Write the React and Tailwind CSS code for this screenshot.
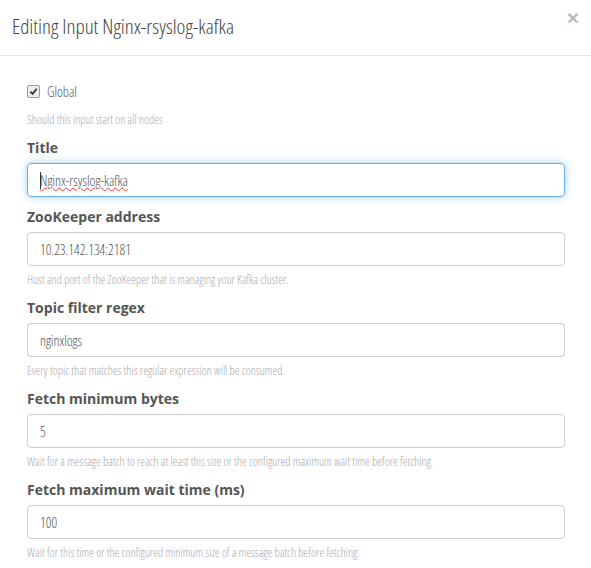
const fields = [
  {
    label: 'ZooKeeper address',
    value: '10.23.142.134:2181',
    help: 'Host and port of the ZooKeeper that is managing your Kafka cluster.',
  },
  {
    label: 'Topic filter regex',
    value: 'nginxlogs',
    help: 'Every topic that matches this regular expression will be consumed.',
  },
  {
    label: 'Fetch minimum bytes',
    value: '5',
    help: 'Wait for a message batch to reach at least this size or the configured maximum wait time before fetching.',
  },
  {
    label: 'Fetch maximum wait time (ms)',
    value: '100',
    help: 'Wait for this time or the configured minimum size of a message batch before fetching.',
  },
];

const cond = "font-['Open_Sans',sans-serif] font-light [font-stretch:75%]";

function Label({ children }) {
  return (
    <div className="font-['Open_Sans',sans-serif] font-bold text-[14px] leading-[20px] text-[#555] mb-[5px]">
      {children}
    </div>
  );
}

function Help({ children, className = '' }) {
  return (
    <div className={`text-[12px] leading-[16px] text-[#aaa] ${cond} ${className}`}>{children}</div>
  );
}

function Field({ label, value, help }) {
  return (
    <div className="mt-[10px]">
      <Label>{label}</Label>
      <div className={`h-[34px] border border-[#ccc] rounded-[4px] px-[12px] flex items-center text-[14px] text-[#555] ${cond}`}>
        {value}
      </div>
      <Help className="mt-[6px]">{help}</Help>
    </div>
  );
}

export default function App() {
  return (
    <div className="w-[591px] h-[568px] bg-white overflow-hidden">
      <div className="h-[56px] border-b border-[#e5e5e5] flex items-start justify-between pl-[12px] pr-[12px]">
        <h4 className={`mt-[13px] text-[21px] leading-[26px] text-[#444] ${cond}`}>
          Editing Input Nginx-rsyslog-kafka
        </h4>
        <span className="mt-[5px] text-[21px] font-bold leading-[26px] text-[#bbb] font-['Liberation_Sans',sans-serif]">
          ×
        </span>
      </div>
      <div className="pl-[27px] pr-[26px] pt-[26px]">
        <div className="flex items-center h-[18px]">
          <span className="w-[13px] h-[13px] border border-[#999] rounded-[2px] bg-[#eee] flex items-center justify-center">
            <svg width="9" height="9" viewBox="0 0 10 10">
              <path d="M1.5 5.2 L4 7.6 L8.6 2" stroke="#333" strokeWidth="2" fill="none" />
            </svg>
          </span>
          <span className={`ml-[7px] text-[14px] text-[#555] ${cond}`}>Global</span>
        </div>
        <Help className="mt-[12px]">Should this input start on all nodes</Help>
        <div className="mt-[10px]">
          <Label>Title</Label>
          <div className={`h-[34px] border border-[#66afe9] rounded-[4px] px-[12px] flex items-center text-[14px] text-[#555] shadow-[0_0_8px_rgba(102,175,233,0.6)] ${cond}`}>
            <span className="w-px h-[17px] bg-[#333] -mr-px" />
            <span className="underline decoration-wavy decoration-red-500 decoration-1">Nginx-rsyslog-kafka</span>
          </div>
        </div>
        {fields.map((f) => (
          <Field key={f.label} {...f} />
        ))}
      </div>
    </div>
  );
}
